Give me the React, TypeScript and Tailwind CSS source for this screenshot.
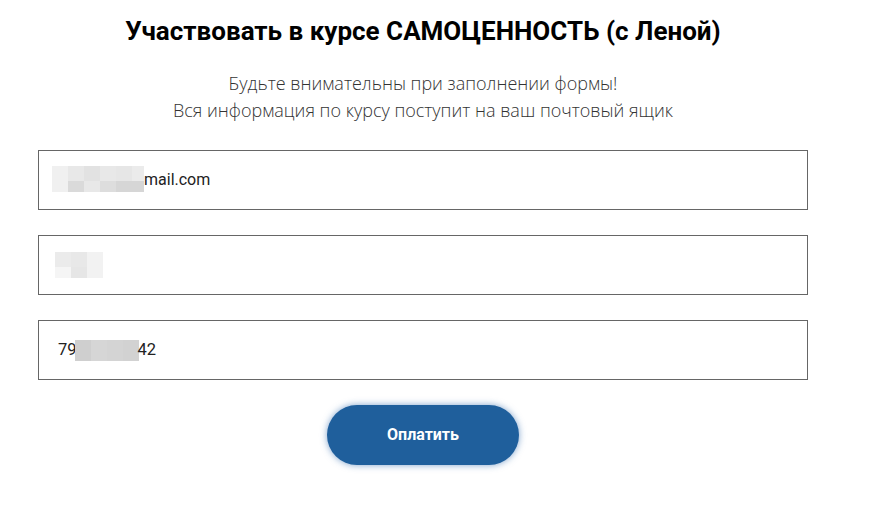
const emailTop = ['#f0f0f0', '#e8e8e8', '#e2e2e2', '#e8e8e8', '#e6e6e6', '#ebebeb']
const emailBottom = ['#f0f0f0', '#dadada', '#e8e8e8', '#dddddd', '#d6d6d6', '#d6d6d6']
const nameTop = ['#ebebeb', '#e8e8e8', '#f2f2f2']
const nameBottom = ['#f5f5f5', '#e6e6e6', '#f2f2f2']
const phoneCells = ['#cfcfcf', '#d6d6d6', '#d4d4d4', '#d2d2d2']

function Pixels({ top, bottom, cell = 16, last }: { top: string[]; bottom: string[]; cell?: number; last?: number }) {
  const widths = top.map((_, i) => (i === top.length - 1 && last ? last : cell))
  return (
    <span className="flex flex-col">
      <span className="flex h-[15px]">
        {top.map((c, i) => (
          <span key={i} style={{ background: c, width: widths[i] }} />
        ))}
      </span>
      <span className="flex h-[11px]">
        {bottom.map((c, i) => (
          <span key={i} style={{ background: c, width: widths[i] }} />
        ))}
      </span>
    </span>
  )
}

function Field({ children }: { children: React.ReactNode }) {
  return (
    <div className="flex h-[60px] items-center border border-[#666666] bg-white pl-[13px] text-[16px] text-[#222222]">
      {children}
    </div>
  )
}

export default function App() {
  return (
    <div className="min-h-[509px] w-[874px] bg-white font-['Roboto',sans-serif]">
      <div className="ml-[38px] flex w-[770px] flex-col pt-[15px]">
        <h1 className="text-center text-[26px] font-bold leading-[32px] text-black">
          Участвовать в курсе САМОЦЕННОСТЬ (с Леной)
        </h1>

        <p className="mt-[23px] text-center font-['Open_Sans',sans-serif] text-[18px] font-light leading-[27px] text-[#333333]">
          Будьте внимательны при заполнении формы!
          <br />
          Вся информация по курсу поступит на ваш почтовый ящик
        </p>

        <div className="mt-[26px] flex flex-col gap-[25px]">
          <Field>
            <span className="flex items-center">
              <span className="mt-[-2px]">
                <Pixels top={emailTop} bottom={emailBottom} last={12} />
              </span>
              <span>mail.com</span>
            </span>
          </Field>
          <Field>
            <span className="ml-[3px] mt-[-1px]">
              <Pixels top={nameTop} bottom={nameBottom} />
            </span>
          </Field>
          <Field>
            <span className="ml-[6px] flex items-center text-[16.5px]">
              <span>79</span>
              <span className="ml-[-2px] flex h-[21px]">
                {phoneCells.map((c, i) => (
                  <span key={i} style={{ background: c, width: 16 }} />
                ))}
              </span>
              <span className="ml-[-1px]">42</span>
            </span>
          </Field>
        </div>

        <div className="mt-[25px] flex justify-center">
          <button className="h-[60px] w-[192px] rounded-full bg-[#1f5f9c] text-[16px] font-bold text-white shadow-[0_0_7px_rgba(40,100,170,0.6)]">
            Оплатить
          </button>
        </div>
      </div>
    </div>
  )
}
